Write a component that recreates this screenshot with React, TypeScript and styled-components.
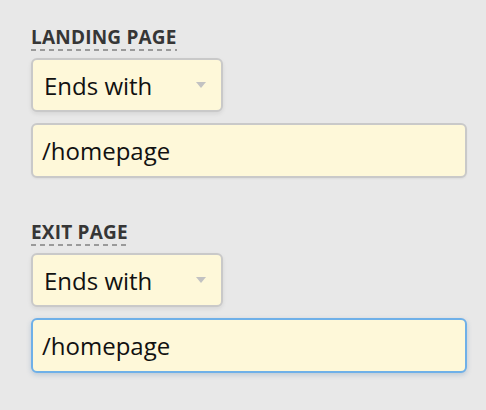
import React from "react";
import styled, { createGlobalStyle } from "styled-components";

const Global = createGlobalStyle`
  html, body { margin: 0; padding: 0; background: #e8e8e8; }
  body { font-family: "Open Sans", "Liberation Sans", sans-serif; }
`;

const Page = styled.div`
  width: 486px;
  height: 410px;
  box-sizing: border-box;
  padding: 25px 19px 0 31px;
  display: flex;
  flex-direction: column;
  gap: 42px;
`;

const Group = styled.div`
  display: flex;
  flex-direction: column;
  align-items: flex-start;
`;

const Label = styled.span`
  font-size: 19px;
  font-weight: 700;
  color: #363636;
  letter-spacing: 0.2px;
  line-height: 24px;
  padding-bottom: 2px;
  background-image: linear-gradient(to right, #9a9a9a 0 5px, transparent 5px 9px);
  background-size: 9px 2px;
  background-repeat: repeat-x;
  background-position: 0 bottom;
  margin-bottom: 7px;
`;

const Select = styled.div`
  box-sizing: border-box;
  width: 192px;
  height: 54px;
  display: flex;
  align-items: center;
  justify-content: space-between;
  padding: 0 15px 0 11px;
  background: #fef8d9;
  border: 2px solid #c9c9c9;
  border-radius: 6px;
  box-shadow: 0 2px 4px rgba(0, 0, 0, 0.08);
  font-size: 24px;
  color: #111;
  margin-bottom: 11px;
`;

const Caret = styled.span`
  width: 0;
  height: 0;
  border-left: 5px solid transparent;
  border-right: 5px solid transparent;
  border-top: 6px solid #c2c2c2;
`;

const Input = styled.div<{ $focused?: boolean }>`
  box-sizing: border-box;
  width: 436px;
  height: 55px;
  display: flex;
  align-items: center;
  padding: 0 9px;
  background: #fef8d9;
  border: 2px solid ${(p) => (p.$focused ? "#6fb0e8" : "#c9c9c9")};
  border-radius: 6px;
  box-shadow: ${(p) =>
    p.$focused ? "0 2px 5px rgba(60, 110, 160, 0.25)" : "0 1px 2px rgba(0,0,0,0.05)"};
  font-size: 24px;
  color: #111;
`;

function Field({ label, focused }: { label: string; focused?: boolean }) {
  return (
    <Group>
      <Label>{label}</Label>
      <Select>
        <span>Ends with</span>
        <Caret />
      </Select>
      <Input $focused={focused}>/homepage</Input>
    </Group>
  );
}

export default function App() {
  return (
    <>
      <Global />
      <Page>
        <Field label="LANDING PAGE" />
        <Field label="EXIT PAGE" focused />
      </Page>
    </>
  );
}
